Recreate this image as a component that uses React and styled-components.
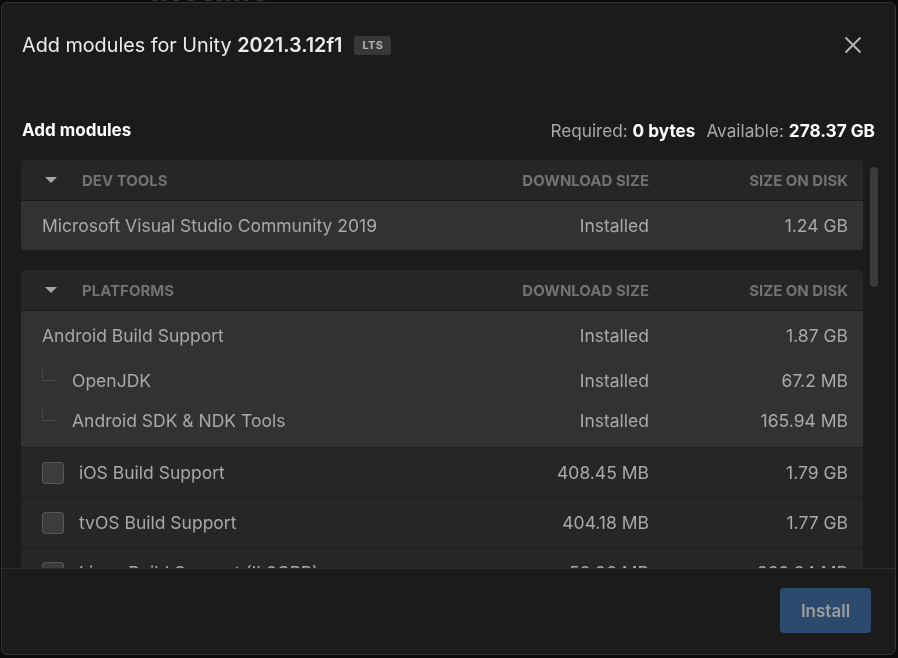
import React from "react";
import styled, { createGlobalStyle } from "styled-components";

const GlobalStyle = createGlobalStyle`
  html, body {
    margin: 0;
    padding: 0;
    background: #0b0b0b;
    font-family: "Inter", "Noto Sans", sans-serif;
    overflow: hidden;
  }
`;

const Backdrop = styled.div`
  width: 898px;
  height: 658px;
  overflow: hidden;
  background: #0b0b0b;
`;

const BackdropTitle = styled.h1`
  margin: -32px 0 0 150px;
  font-size: 34px;
  font-weight: 700;
  color: #363636;
`;

const Modal = styled.div`
  position: fixed;
  left: 1px;
  top: 2px;
  width: 895px;
  height: 653px;
  box-sizing: border-box;
  background: #1b1b1b;
  border: 1px solid #343434;
  border-radius: 6px;
  display: flex;
  flex-direction: column;
  overflow: hidden;
`;

const Header = styled.div`
  height: 85px;
  box-sizing: border-box;
  padding: 30px 33px 0 20px;
  display: flex;
  align-items: flex-start;
  justify-content: space-between;
  flex-shrink: 0;
`;

const Title = styled.div`
  display: flex;
  align-items: center;
  gap: 12px;
  font-size: 19.8px;
  line-height: 24px;
  color: #ececec;

  b {
    font-weight: 600;
  }
`;

const Badge = styled.span`
  background: #383838;
  color: #b4b4b4;
  font-size: 11px;
  font-weight: 700;
  line-height: 19px;
  padding: 0 8px;
  border-radius: 3px;
  letter-spacing: 0.3px;
`;

const CloseButton = styled.button`
  background: none;
  border: none;
  padding: 0;
  margin-top: 3px;
  width: 18px;
  height: 18px;
  cursor: pointer;
  color: #b4b4b4;
  display: flex;
`;

const Toolbar = styled.div`
  padding: 27px 20px 15px 20px;
  height: 30px;
  display: flex;
  align-items: center;
  justify-content: space-between;
  flex-shrink: 0;
`;

const ToolbarTitle = styled.div`
  font-size: 17px;
  font-weight: 700;
  color: #ffffff;
`;

const Storage = styled.div`
  font-size: 17.2px;
  color: #a8a8a8;
  display: flex;
  gap: 11px;

  b {
    color: #ffffff;
    font-weight: 700;
  }
`;

const BodyWrap = styled.div`
  position: relative;
  flex: 1;
  min-height: 0;
`;

const Body = styled.div`
  height: 100%;
  box-sizing: border-box;
  overflow: hidden;
  padding: 0 32px 0 19px;
`;

const ScrollThumb = styled.div`
  position: absolute;
  top: 7px;
  right: 17px;
  width: 8px;
  height: 120px;
  border-radius: 4px;
  background: #3b3b3b;
`;

const Section = styled.div`
  margin-bottom: 20px;
  border-radius: 4px;
  overflow: hidden;
  background: #262626;
`;

const Grid = styled.div`
  display: grid;
  grid-template-columns: 1fr 200px 199px;
  align-items: center;
  padding-right: 15px;
`;

const SectionHeader = styled(Grid)`
  height: 40px;
  border-bottom: 1px solid #1a1a1a;
  font-size: 15px;
  font-weight: 700;
  color: #727272;
  text-transform: uppercase;
`;

const SectionName = styled.div`
  display: flex;
  align-items: center;
  padding-left: 24px;
  gap: 25px;
`;

const Caret = styled.span`
  width: 0;
  height: 0;
  border-left: 6px solid transparent;
  border-right: 6px solid transparent;
  border-top: 6px solid #a6a6a6;
`;

const Right = styled.div`
  text-align: right;
`;

const InstalledGroup = styled.div`
  background: #323232;
  padding-bottom: ${(p) => (p.$tail ? "7px" : "0")};
  border-bottom: 1px solid #1e1e1e;
  &:last-child {
    border-bottom: none;
  }
`;

const Row = styled(Grid)`
  height: ${(p) => (p.$child ? "40px" : "49px")};
  font-size: 17.5px;
  color: #a9a9a9;
`;

const OptionRow = styled(Row)`
  background: #262626;
  border-bottom: 1px solid #1c1c1c;
  &:last-child {
    border-bottom: none;
  }
`;

const Name = styled.div`
  display: flex;
  align-items: center;
  padding-left: 21px;
  white-space: nowrap;
`;

const Branch = styled.span`
  width: 13px;
  height: 10px;
  margin: -10px 16px 0 0;
  border-left: 1px solid #4a4a4a;
  border-bottom: 1px solid #4a4a4a;
`;

const Checkbox = styled.span`
  width: 20px;
  height: 20px;
  margin-right: 15px;
  background: #3c3c3c;
  border: 1px solid #575757;
  border-radius: 3px;
  flex-shrink: 0;
`;

const Footer = styled.div`
  height: 86px;
  box-sizing: border-box;
  border-top: 1px solid #2f2f2f;
  padding: 19px 24px 0 0;
  display: flex;
  justify-content: flex-end;
  align-items: flex-start;
  flex-shrink: 0;
`;

const InstallButton = styled.button`
  width: 91px;
  height: 45px;
  background: #2c4a6e;
  color: #9c9c9c;
  border: none;
  border-radius: 4px;
  font-family: "Inter", sans-serif;
  font-size: 17px;
  font-weight: 600;
  cursor: default;
`;

const sections = [
  {
    name: "Dev tools",
    installed: [
      {
        name: "Microsoft Visual Studio Community 2019",
        download: "Installed",
        disk: "1.24 GB",
        children: [],
      },
    ],
    options: [],
  },
  {
    name: "Platforms",
    installed: [
      {
        name: "Android Build Support",
        download: "Installed",
        disk: "1.87 GB",
        children: [
          { name: "OpenJDK", download: "Installed", disk: "67.2 MB" },
          { name: "Android SDK & NDK Tools", download: "Installed", disk: "165.94 MB" },
        ],
      },
    ],
    options: [
      { name: "iOS Build Support", download: "408.45 MB", disk: "1.79 GB" },
      { name: "tvOS Build Support", download: "404.18 MB", disk: "1.77 GB" },
      { name: "Linux Build Support (IL2CPP)", download: "58.96 MB", disk: "232.34 MB" },
    ],
  },
];

const CloseIcon = () => (
  <svg width="18" height="18" viewBox="0 0 18 18">
    <path d="M1.5 1.5 L16.5 16.5 M16.5 1.5 L1.5 16.5" stroke="currentColor" strokeWidth="2" />
  </svg>
);

const App = () => {
  return (
    <Backdrop>
      <GlobalStyle />
      <BackdropTitle>Installs</BackdropTitle>

      <Modal>
        <Header>
          <Title>
            <span>
              Add modules for Unity <b>2021.3.12f1</b>
            </span>
            <Badge>LTS</Badge>
          </Title>
          <CloseButton aria-label="Close">
            <CloseIcon />
          </CloseButton>
        </Header>

        <Toolbar>
          <ToolbarTitle>Add modules</ToolbarTitle>
          <Storage>
            <span>
              Required: <b>0 bytes</b>
            </span>
            <span>
              Available: <b>278.37 GB</b>
            </span>
          </Storage>
        </Toolbar>

        <BodyWrap>
          <Body>
            {sections.map((section) => (
              <Section key={section.name}>
                <SectionHeader>
                  <SectionName>
                    <Caret />
                    {section.name}
                  </SectionName>
                  <Right>Download size</Right>
                  <Right>Size on disk</Right>
                </SectionHeader>

                {section.installed.map((mod) => (
                  <InstalledGroup key={mod.name} $tail={mod.children.length > 0}>
                    <Row>
                      <Name>{mod.name}</Name>
                      <Right>{mod.download}</Right>
                      <Right>{mod.disk}</Right>
                    </Row>
                    {mod.children.map((child) => (
                      <Row key={child.name} $child>
                        <Name>
                          <Branch />
                          {child.name}
                        </Name>
                        <Right>{child.download}</Right>
                        <Right>{child.disk}</Right>
                      </Row>
                    ))}
                  </InstalledGroup>
                ))}

                {section.options.map((mod) => (
                  <OptionRow key={mod.name}>
                    <Name>
                      <Checkbox />
                      {mod.name}
                    </Name>
                    <Right>{mod.download}</Right>
                    <Right>{mod.disk}</Right>
                  </OptionRow>
                ))}
              </Section>
            ))}
          </Body>
          <ScrollThumb />
        </BodyWrap>

        <Footer>
          <InstallButton disabled>Install</InstallButton>
        </Footer>
      </Modal>
    </Backdrop>
  );
};

export default App;
